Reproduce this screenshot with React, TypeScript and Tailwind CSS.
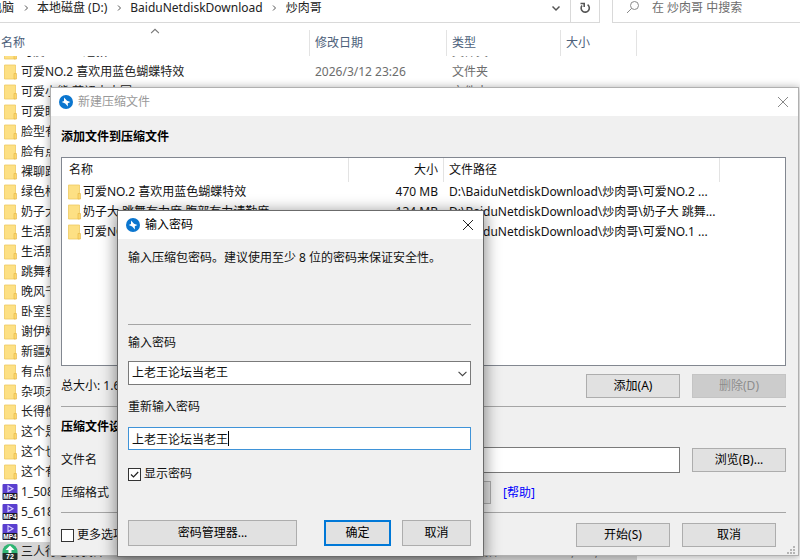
import { useEffect, useRef, useState } from "react"
import type { ButtonHTMLAttributes, ReactNode } from "react"
import clsx from "clsx"

type FileKind = "folder" | "mp4" | "archive"

interface IFileRow {
     name: string
     kind: FileKind
     date?: string
     type?: string
     size?: string
}

// --- DATA ---
const FILES: IFileRow[] = [
     { name: "可爱NO.17 短款", kind: "folder", date: "2026/1/10 20:10", type: "文件夹" },
     { name: "可爱NO.2 喜欢用蓝色蝴蝶特效", kind: "folder", date: "2026/3/12 23:26", type: "文件夹" },
     { name: "可爱小熊 蓝裙大大圆", kind: "folder", type: "文件夹" },
     { name: "可爱眼", kind: "folder" },
     { name: "脸型有", kind: "folder" },
     { name: "脸有点", kind: "folder" },
     { name: "裸聊跟", kind: "folder" },
     { name: "绿色格", kind: "folder" },
     { name: "奶子大", kind: "folder" },
     { name: "生活照", kind: "folder" },
     { name: "生活照", kind: "folder" },
     { name: "跳舞有", kind: "folder" },
     { name: "晚风千", kind: "folder" },
     { name: "卧室里", kind: "folder" },
     { name: "谢伊婷", kind: "folder" },
     { name: "新疆妹", kind: "folder" },
     { name: "有点像", kind: "folder" },
     { name: "杂项未", kind: "folder" },
     { name: "长得像", kind: "folder" },
     { name: "这个是", kind: "folder" },
     { name: "这个也", kind: "folder" },
     { name: "这个有", kind: "folder" },
     { name: "1_508", kind: "mp4" },
     { name: "5_618", kind: "mp4" },
     { name: "5_618", kind: "mp4" },
     { name: "三人行必有我师.72", kind: "archive", date: "2026/3/12 23:26", type: "压缩文件", size: "1,350,356 KB" },
]

const SELECTED = [
     { name: "可爱NO.2 喜欢用蓝色蝴蝶特效", size: "470 MB", path: "D:\\BaiduNetdiskDownload\\炒肉哥\\可爱NO.2 ..." },
     { name: "奶子大 跳舞有力度 腹部有力请勤度", size: "134 MB", path: "D:\\BaiduNetdiskDownload\\炒肉哥\\奶子大 跳舞..." },
     { name: "可爱NO.1", size: "", path: "D:\\BaiduNetdiskDownload\\炒肉哥\\可爱NO.1 ..." },
]

// --- ICONS ---
const FolderIcon = () => (
     <svg width="13" height="16" viewBox="0 0 13 16" className="shrink-0" aria-hidden="true">
          <path d="M.5 1h11v14H.5z" fill="#fde084" />
          <path d="M.5 1h11v14H.5z" fill="none" stroke="#efca62" strokeWidth=".8" />
          <path d="M10 9.5h2.5V15H10z" fill="#fbd66f" stroke="#e5b63f" strokeWidth=".6" />
     </svg>
)

const Mp4Icon = () => (
     <svg width="16" height="16" viewBox="0 0 16 16" className="shrink-0" aria-hidden="true">
          <rect x=".5" y="0" width="15" height="10" rx="1" fill="#5a3fcf" />
          <path d="M6 1.800l5 2.900-5 2.900z" fill="none" stroke="#d9d0ff" strokeWidth="1.1" />
          <rect x=".5" y="9" width="15" height="7" rx="1" fill="#1c1a2b" />
          <text x="8" y="15" textAnchor="middle" fontSize="6.5" fontWeight="700" fontFamily="Liberation Sans, sans-serif" fill="#fff">MP4</text>
     </svg>
)

const ArchiveIcon = () => (
     <svg width="16" height="16" viewBox="0 0 16 16" className="shrink-0" aria-hidden="true">
          <path d="M.5 10V7.500a7.500 7.500 0 0 1 15 0V10z" fill="#2fb573" />
          <path d="M8 1.500L12.500 6H9.500v3h-3V6h-3z" fill="#fff" />
          <rect x=".5" y="9" width="15" height="7" rx="1" fill="#20302a" />
          <text x="8" y="15" textAnchor="middle" fontSize="7" fontWeight="700" fontFamily="Liberation Sans, sans-serif" fill="#fff">72</text>
     </svg>
)

const AppIcon = () => (
     <svg width="14" height="14" viewBox="0 0 14 14" className="shrink-0" aria-hidden="true">
          <circle cx="7" cy="7" r="7" fill="#0b76cf" />
          <path d="M5 2.600L8 5.800 11.400 7 8.800 8.200 8.900 11.400 6.200 8.500 2.700 7.100 5 6z" fill="#fff" />
     </svg>
)

const Chevron = ({ d, size = 8, className }: { d: string; size?: number; className?: string }) => (
     <svg width={size} height={size} viewBox="0 0 8 8" className={clsx("shrink-0", className)} fill="none" stroke="currentColor" aria-hidden="true">
          <path d={d} />
     </svg>
)

const DOWN = "M.5 2.500L4 6l3.500-3.500"
const RIGHT = "M3 1.500L5.500 4 3 6.500"
const UP = "M.5 5.500L4 2l3.500 3.500"

const FILE_ICONS: Record<FileKind, ReactNode> = {
     folder: <FolderIcon />,
     mp4: <Mp4Icon />,
     archive: <ArchiveIcon />,
}

// --- SHARED ---
const Button = ({ primary, className, ...props }: ButtonHTMLAttributes<HTMLButtonElement> & { primary?: boolean }) => (
     <button
          type="button"
          className={clsx(
               "shrink-0 flex items-center justify-center bg-[#e1e1e1] text-black disabled:bg-[#cccccc] disabled:border-[#c4c4c4] disabled:text-[#8d8d8d]",
               primary ? "border-2 border-[#0078d7]" : "border border-[#adadad]",
               className,
          )}
          {...props}
     />
)

const CheckBox = ({ id, label, defaultChecked }: { id: string; label: string; defaultChecked?: boolean }) => (
     <div className="flex items-center gap-[3px]">
          <span className="relative size-[13px] shrink-0">
               <input id={id} type="checkbox" defaultChecked={defaultChecked} className="peer block size-[13px] appearance-none bg-white border border-[#333333]" />
               <svg viewBox="0 0 13 13" className="hidden peer-checked:block absolute inset-0 pointer-events-none" fill="none" stroke="#222" strokeWidth="1.2" aria-hidden="true">
                    <path d="M3 6.500l2.500 2.500L10.200 4" />
               </svg>
          </span>
          <label htmlFor={id} className="whitespace-nowrap">{label}</label>
     </div>
)

const TitleBar = ({ title, active }: { title: string; active?: boolean }) => (
     <div className="h-7 shrink-0 flex items-center gap-[5px] pl-2 pr-[9px] bg-white">
          <AppIcon />
          <h2 className={clsx("flex-1", active ? "text-black" : "text-[#999999]")}>{title}</h2>
          <button type="button" aria-label="关闭" className={active ? "text-[#222222]" : "text-[#888888]"}>
               <svg width="12" height="12" viewBox="0 0 12 12" stroke="currentColor" aria-hidden="true">
                    <path d="M1 1l10 10M11 1L1 11" />
               </svg>
          </button>
     </div>
)

const Rule = ({ className }: { className?: string }) => <hr className={clsx("border-0 border-t border-[#a5a5a5]", className)} />

// --- EXPLORER ---
const AddressBar = () => (
     <div className="h-[23px] shrink-0 flex gap-3 leading-4 text-[#222222]">
          <nav className="flex-1 flex items-start border-b border-r border-[#d9d9d9]">
               <span className="w-[14px] flex justify-end overflow-hidden whitespace-nowrap">电脑</span>
               {["本地磁盘 (D:)", "BaiduNetdiskDownload", "炒肉哥"].map((part) => (
                    <span key={part} className="flex items-center">
                         <span className="w-[23px] flex justify-center text-[#555555]"><Chevron d={RIGHT} /></span>
                         <a href="#" className="whitespace-nowrap">{part}</a>
                    </span>
               ))}
               <button type="button" aria-label="历史" className="ml-auto w-7 h-4 flex items-center justify-center text-[#555555]">
                    <Chevron d={DOWN} className="stroke-[1.5]" />
               </button>
               <button type="button" aria-label="刷新" className="w-[29px] h-full pb-1.5 flex items-center justify-center border-l border-[#d9d9d9] text-[#555555]">
                    <svg width="12" height="12" viewBox="0 0 12 12" fill="none" stroke="currentColor" strokeWidth="1.6" aria-hidden="true">
                         <path d="M8.600 2.700A4.100 4.100 0 1 1 3 3.500" />
                         <path d="M1.500 1.500h3.700v3.500" />
                    </svg>
               </button>
          </nav>
          <label className="w-[188px] flex items-start gap-3 pl-[13px] border-b border-l border-[#d9d9d9]">
               <svg width="14" height="14" viewBox="0 0 14 14" fill="none" stroke="#8a8a8a" className="shrink-0" aria-hidden="true">
                    <circle cx="8.5" cy="5.5" r="4" />
                    <path d="M5.600 8.400L1 13" />
               </svg>
               <input type="text" aria-label="搜索" placeholder="在 炒肉哥 中搜索" className="w-full h-4 outline-none placeholder:text-[#6d6d6d]" />
          </label>
     </div>
)

const FileList = () => {
     const scrollRef = useRef<HTMLDivElement>(null)

     useEffect(() => {
          if (scrollRef.current) scrollRef.current.scrollTop = 14
     }, [])

     return (
          <div ref={scrollRef} className="flex-1 min-h-0 overflow-hidden">
               <table className="w-full table-fixed border-separate border-spacing-0">
                    <colgroup>
                         <col className="w-[310px]" />
                         <col className="w-[137px]" />
                         <col className="w-[114px]" />
                         <col className="w-[76px]" />
                         <col />
                    </colgroup>
                    <thead>
                         <tr>
                              {["名称", "修改日期", "类型", "大小"].map((title, i) => (
                                   <th key={title} className="sticky top-0 z-10 h-[33px] p-0 bg-white text-left font-normal text-[#4c607a]">
                                        <div className={clsx("h-[26px] mt-1.5 flex items-center border-r border-[#e3e3e3]", i === 0 ? "pl-px" : "pl-[5px]")}>
                                             {title}
                                        </div>
                                        {i === 0 && <Chevron d={UP} size={9} className="absolute top-1 left-1/2 -translate-x-1/2 text-[#777777]" />}
                                   </th>
                              ))}
                              <th className="sticky top-0 z-10 p-0 bg-white" />
                         </tr>
                    </thead>
                    <tbody>
                         {FILES.map((file, i) => (
                              <tr key={i} className={clsx("h-5 whitespace-nowrap text-[#6d6d6d]", file.kind === "archive" && "bg-[#d5d5d5]")}>
                                   <td className="p-0 text-[#222222]">
                                        <div className="flex items-center h-5">
                                             <span className="w-[21px] shrink-0 flex pl-0.5">
                                                  <span className="w-4 flex justify-center">{FILE_ICONS[file.kind]}</span>
                                             </span>
                                             {file.name}
                                        </div>
                                   </td>
                                   <td className="p-0 pl-[5px]">{file.date}</td>
                                   <td className="p-0 pl-[5px]">{file.type}</td>
                                   <td className="p-0 text-right">{file.size}</td>
                                   <td className="p-0 bg-white" />
                              </tr>
                         ))}
                    </tbody>
               </table>
          </div>
     )
}

// --- NEW ARCHIVE WINDOW ---
const ArchiveWindow = () => (
     <section className="absolute left-[51px] right-[2px] top-[88px] bottom-[5px] flex flex-col bg-[#f0f0f0] ring-1 ring-[#b0b0b0] shadow-[0_1px_8px_2px_rgba(0,0,0,0.3)]">
          <TitleBar title="新建压缩文件" />
          <div className="flex-1 min-h-0 flex flex-col pl-[10px] pr-3 pt-[11px] pb-2">
               <h3 className="leading-5 font-bold text-black">添加文件到压缩文件</h3>
               <div className="flex-1 min-h-0 mt-[10px] bg-white border border-[#828790] overflow-hidden">
                    <table className="w-full table-fixed border-separate border-spacing-0">
                         <colgroup>
                              <col className="w-[287px]" />
                              <col className="w-[95px]" />
                              <col className="w-[276px]" />
                              <col />
                         </colgroup>
                         <thead>
                              <tr>
                                   {["名称", "大小", "文件路径"].map((title, i) => (
                                        <th key={title} className="h-6 p-0 font-normal">
                                             <div className={clsx("h-6 flex items-center border-r border-[#e3e3e3]", ["pl-[7px]", "justify-end pr-[5px]", "pl-[5px]"][i])}>
                                                  {title}
                                             </div>
                                        </th>
                                   ))}
                                   <th />
                              </tr>
                         </thead>
                         <tbody>
                              {SELECTED.map((item) => (
                                   <tr key={item.path} className="h-5 whitespace-nowrap">
                                        <td className="p-0">
                                             <div className="flex items-center h-5 gap-[2px] pl-1.5">
                                                  <FolderIcon />
                                                  {item.name}
                                             </div>
                                        </td>
                                        <td className="p-0 pr-1.5 text-right">{item.size}</td>
                                        <td className="p-0 pl-[5px]">{item.path}</td>
                                        <td className="p-0" />
                                   </tr>
                              ))}
                         </tbody>
                    </table>
               </div>
               <div className="mt-2 flex items-center gap-3">
                    <p className="flex-1">总大小: 1.6 GB</p>
                    <Button className="w-[94px] h-6">添加(A)</Button>
                    <Button className="w-[94px] h-6" disabled>删除(D)</Button>
               </div>
               <Rule className="mt-2" />
               <h3 className="mt-[10px] leading-5 font-bold text-black">压缩文件设置</h3>
               <div className="mt-[10px] flex items-center">
                    <label htmlFor="file-name" className="w-20 shrink-0">文件名</label>
                    <input id="file-name" type="text" className="flex-1 min-w-0 h-[26px] px-1 bg-white border border-[#7a7a7a] outline-none" />
                    <Button className="ml-3 w-[94px] h-6">浏览(B)...</Button>
               </div>
               <div className="mt-2 flex items-center">
                    <label htmlFor="format" className="w-20 shrink-0">压缩格式</label>
                    <select id="format" className="w-[350px] h-[23px] appearance-none bg-[#e1e1e1] border border-[#adadad]" />
                    <a href="#" className="ml-3 text-[#0000ff]">[帮助]</a>
               </div>
               <Rule className="mt-2" />
               <div className="mt-[10px] pr-[10px] flex items-center gap-3">
                    <div className="flex-1"><CheckBox id="more" label="更多选项" /></div>
                    <Button className="w-[94px] h-6">开始(S)</Button>
                    <Button className="w-[94px] h-6">取消</Button>
               </div>
          </div>
          <svg width="8" height="8" viewBox="0 0 8 8" fill="#b5b5b5" className="absolute right-[3px] bottom-px" aria-hidden="true">
               <path d="M6 0h2v2H6zM3 3h2v2H3zM6 3h2v2H6zM0 6h2v2H0zM3 6h2v2H3zM6 6h2v2H6z" />
          </svg>
     </section>
)

// --- PASSWORD WINDOW ---
const PasswordWindow = () => {
     const [password, setPassword] = useState("上老王论坛当老王")

     return (
          <section className="absolute left-[118px] top-[211px] w-[365px] flex flex-col bg-[#f0f0f0] ring-1 ring-[#6b6b6b] shadow-[0_3px_14px_3px_rgba(0,0,0,0.42)]">
               <TitleBar title="输入密码" active />
               <div className="flex flex-col pl-[10px] pr-3 pb-[10px]">
                    <p className="mt-[9px] h-[76px] leading-5">输入压缩包密码。建议使用至少 8 位的密码来保证安全性。</p>
                    <Rule />
                    <label htmlFor="password" className="mt-2 leading-5">输入密码</label>
                    <div className="relative mt-2">
                         <select id="password" className="block w-full h-6 px-[3px] appearance-none bg-white border border-[#7a7a7a] outline-none">
                              <option>上老王论坛当老王</option>
                         </select>
                         <Chevron d={DOWN} size={9} className="absolute right-1 top-2 text-[#444444] pointer-events-none" />
                    </div>
                    <label htmlFor="password-again" className="mt-3 leading-5">重新输入密码</label>
                    <div className="relative mt-[10px]">
                         <input
                              id="password-again"
                              type="text"
                              value={password}
                              onChange={(e) => setPassword(e.target.value)}
                              className="block w-full h-[23px] px-[3px] bg-white border border-[#3f93d8] outline-none caret-transparent"
                         />
                         {/* Steady caret at the end of the value */}
                         <span aria-hidden="true" className="absolute left-1 top-1 bottom-1 flex pointer-events-none border-r border-black">
                              <span className="invisible">{password}</span>
                         </span>
                    </div>
                    <div className="mt-[14px] leading-5"><CheckBox id="show" label="显示密码" defaultChecked /></div>
                    <div className="mt-9 flex items-center">
                         <Button className="w-[169px] h-[26px]">密码管理器...</Button>
                         <Button className="ml-auto w-[67px] h-[26px]" primary>确定</Button>
                         <Button className="ml-[11px] w-[69px] h-[26px]">取消</Button>
                    </div>
               </div>
          </section>
     )
}

const App = () => (
     <main className="relative h-screen flex flex-col overflow-hidden bg-white font-['Noto_Sans','Noto_Sans_CJK_SC',sans-serif] text-xs leading-4 text-[#111111]">
          <AddressBar />
          <FileList />
          <ArchiveWindow />
          <PasswordWindow />
     </main>
)

export default App
